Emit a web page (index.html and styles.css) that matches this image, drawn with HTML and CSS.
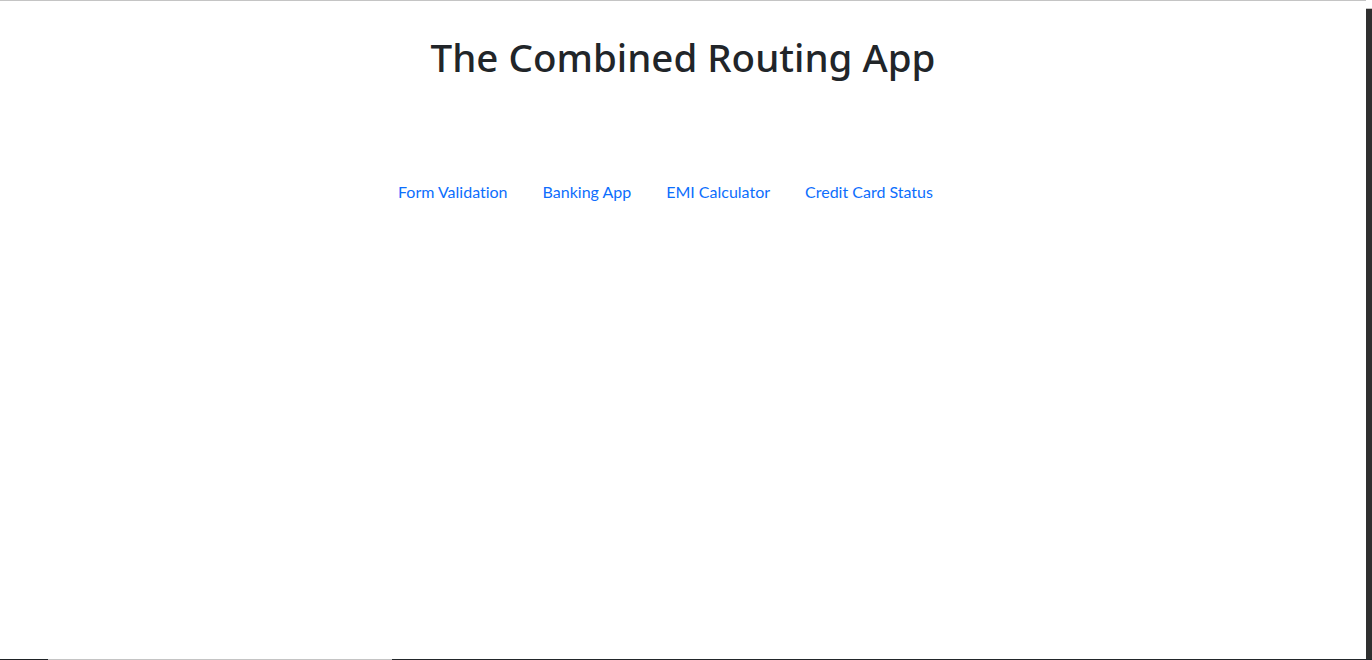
FILE: index.html
```html
<!DOCTYPE html>
<html>
<head>
<meta charset="utf-8">
<title>The Combined Routing App</title>
<link rel="stylesheet" href="styles.css">
</head>
<body>
<div class="screen">
  <main class="page">
    <h1 class="title">The Combined Routing App</h1>
    <nav class="nav">
      <a class="nav-link" href="#">Form Validation</a>
      <a class="nav-link" href="#">Banking App</a>
      <a class="nav-link" href="#">EMI Calculator</a>
      <a class="nav-link" href="#">Credit Card Status</a>
    </nav>
  </main>
  <div class="scroll-strip"></div>
  <div class="taskbar">
    <span class="seg seg-a"></span>
    <span class="seg seg-b"></span>
    <span class="seg seg-c"></span>
  </div>
</div>
</body>
</html>
```
FILE: styles.css
```css
html, body {
  margin: 0;
  padding: 0;
  background: #ffffff;
}
.screen {
  height: 660px;
  display: grid;
  grid-template-columns: 1fr 6px;
  grid-template-rows: 1fr 1px;
}
.page {
  border-top: 1px solid #c4c4c4;
  padding-top: 33px;
  overflow: hidden;
}
.title {
  margin: 0;
  text-align: center;
  font-family: "Noto Sans", sans-serif;
  font-size: 38.5px;
  font-weight: 500;
  line-height: 46px;
  color: #212529;
}
.nav {
  margin-top: 100px;
  display: flex;
  justify-content: center;
}
.nav-link {
  font-family: Lato, "Noto Sans", sans-serif;
  font-size: 16px;
  line-height: 24px;
  font-variant-ligatures: none;
  color: #0d6efd;
  text-decoration: none;
  padding-right: 35px;
}
.scroll-strip {
  background: #2f2f2f;
  margin-top: 8px;
  border-top: 1px solid #c4c4c4;
}
.taskbar {
  grid-column: 1 / -1;
  display: flex;
}
.seg { display: block; height: 1px; }
.seg-a { width: 48px; background: #1e2225; }
.seg-b { width: 344px; background: #c4c4c4; }
.seg-c { flex: 1; background: #22262a; }
```
